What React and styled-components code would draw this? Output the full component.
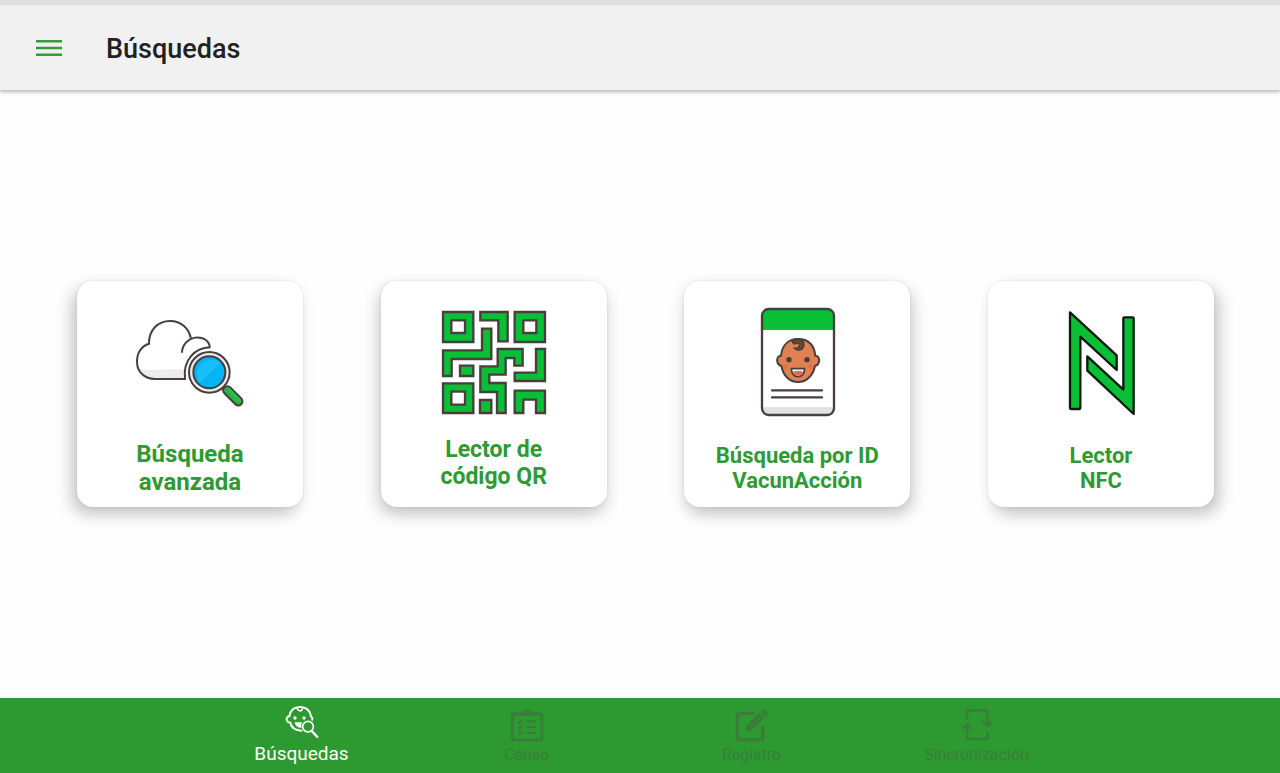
import React, { useState } from 'react'
import styled, { createGlobalStyle } from 'styled-components'

const INK = '#483f3c'
const GREEN = '#09bf35'

const MenuIcon = () => (
  <svg width='26' height='18' viewBox='0 0 26 18' fill='#379c37' aria-hidden='true'>
    <path d='M0 1h26v2.4H0zM0 7.8h26v2.4H0zM0 14.6h26v2.4H0z' />
  </svg>
)

const CloudSearchIcon = () => (
  <svg viewBox='30 -6 360 360' fill='none' stroke={INK} strokeWidth='6' aria-hidden='true'>
    <path
      d='M195 222H105C73 222 51 200 51 170C51 143 65 122 87 116C86 75 114 48 150 48C183 48 208 70 213 102C240 91 266 105 269 126C225 128 190 160 195 222Z'
      fill='#fff'
      stroke='none'
    />
    <path d='M54 188C75 200 130 193 193 193L195 222H105C77 222 59 207 54 188Z' fill='#ececec' stroke='none' />
    <path d='M271 127C225 129 188 163 195 222H105C73 222 51 200 51 170C51 143 65 122 87 116C86 75 114 48 150 48C183 48 208 70 213 102' />
    <path d='M186 143C187 91 262 80 270 127' />
    <path d='M301 244l16 12' strokeWidth='12' />
    <circle cx='268' cy='202' r='61' fill='#e6eaf3' />
    <circle cx='268' cy='202' r='48' fill='#05b4f5' />
    <path d='M238 234A45 45 0 0 1 302 173Z' fill='#18bffb' stroke='none' />
    <path d='M322 256l33 33' strokeWidth='31' strokeLinecap='round' />
    <path d='M322 256l33 33' stroke='#2eae49' strokeWidth='19' strokeLinecap='round' />
    <path d='M327 254l30 31' stroke='#23c24b' strokeWidth='9' strokeLinecap='round' />
  </svg>
)

const QrIcon = () => (
  <svg viewBox='0 0 360 360' fill={GREEN} stroke={INK} strokeWidth='7' fillRule='evenodd' aria-hidden='true'>
    <path d='M27 27H118V117H27ZM52 52V90H93V52Z' />
    <path d='M242 27H333V117H242ZM268 52V90H307V52Z' />
    <path d='M27 241H118V330H27ZM52 266V305H93V266Z' />
    <path d='M139 27H221V115H193V52H139Z' />
    <path d='M144 77H172V168H53V219H27V142H144Z' />
    <path d='M78 188H118V219H78Z' />
    <path d='M191 138H266V188H241V165H215V215H166V240H215V330H189V267H139V190H191Z' />
    <path d='M306 138H333V234H242V209H306Z' />
    <path d='M138 291H172V330H138Z' />
    <path d='M242 263H333V330H306V290H268V330H242Z' />
  </svg>
)

const IdCardIcon = () => (
  <svg viewBox='-9 9 360 360' fill='none' stroke={INK} strokeWidth='7' strokeLinecap='round' aria-hidden='true'>
    <rect x='66' y='27' width='216' height='318' rx='20' fill='#fff' stroke='none' />
    <path d='M66 90V47Q66 27 86 27H262Q282 27 282 47V90Z' fill={GREEN} stroke='none' />
    <path d='M66 321H282V325Q282 345 262 345H86Q66 345 66 325Z' fill='#e2e2e2' stroke='none' />
    <rect x='66' y='27' width='216' height='318' rx='20' />
    <path
      d='M174 117C208 117 223 139 226 167C240 166 243 192 225 198C219 228 199 246 174 246C149 246 130 228 124 198C106 192 109 166 123 167C126 139 142 117 174 117Z'
      fill='#e08152'
      strokeWidth='6'
    />
    <path
      d='M157 124C162 117 178 115 185 120C194 127 194 140 187 147C180 153 169 151 162 144C170 146 178 143 178 136C178 130 172 127 168 131C161 133 157 129 157 124Z'
      fill='#65453c'
      strokeWidth='4'
      strokeLinejoin='round'
    />
    <circle cx='147' cy='179' r='8' fill={INK} stroke='none' />
    <circle cx='201' cy='179' r='8' fill={INK} stroke='none' />
    <circle cx='137' cy='200' r='7' fill='#e4704a' stroke='none' />
    <circle cx='211' cy='200' r='7' fill='#e4704a' stroke='none' />
    <path d='M154 206H194C193 222 185 230 174 230C163 230 155 222 154 206Z' fill='#fff' strokeWidth='5' strokeLinejoin='round' />
    <path d='M158 215Q174 209 190 215Q185 227 174 227Q163 227 158 215Z' fill='#f0645b' stroke='none' />
    <path d='M96 271H246M96 292H246' />
  </svg>
)

const NfcIcon = () => (
  <svg viewBox='-27 9 360 360' fill={GREEN} stroke='#0b1a0d' strokeWidth='7' strokeLinejoin='round' aria-hidden='true'>
    <path d='M60 37L200 166V210L91 110V324Q91 327 88 327H63Q60 327 60 324Z' />
    <path d='M251 342L112 212V169L220 269V55Q220 52 223 52H248Q251 52 251 55Z' />
  </svg>
)

const BabySearchIcon = () => (
  <svg viewBox='132 42 108 108' fill='none' stroke='currentColor' strokeWidth='6' strokeLinecap='round' aria-hidden='true'>
    <path d='M184 122C165 121 154 112 151 98C137 98 137 79 148 79C151 61 163 51 180 51C199 51 210 62 213 79C217 82 218 85 217 89' />
    <path d='M171 54C172 63 185 66 187 57' strokeWidth='5' />
    <circle cx='165' cy='84' r='5' fill='currentColor' stroke='none' />
    <circle cx='192' cy='84' r='5' fill='currentColor' stroke='none' />
    <path d='M164 97H186Q182 104 185 113Q168 115 164 97Z' fill='currentColor' stroke='none' />
    <circle cx='204' cy='110' r='16' strokeWidth='5' />
    <path d='M217 125l15 16' strokeWidth='7' />
  </svg>
)

const CensusIcon = () => (
  <svg viewBox='57 36 108 108' fill='none' stroke='currentColor' strokeWidth='9' aria-hidden='true'>
    <rect x='67' y='56' width='89' height='79' rx='7' />
    <path d='M90 62V54Q90 49 95 49H101Q104 43 111 43Q118 43 121 49H127Q132 49 132 54V62Z' fill='currentColor' stroke='none' />
    <path d='M111 79H138M111 96H138M111 114H138' strokeWidth='6' />
    <path d='M84 79l5 5l9 -10M84 96l5 5l9 -10M84 114l5 5l9 -10' strokeWidth='5' />
  </svg>
)

const RegisterIcon = () => (
  <svg viewBox='72 36 108 108' fill='none' stroke='currentColor' strokeWidth='10' aria-hidden='true'>
    <path d='M134 55H88Q82 55 82 61V128Q82 134 88 134H152Q158 134 158 128V92' />
    <path d='M106 109L110 90L147 53L163 69L126 106ZM151 49L156 44Q160 41 164 44L172 52Q175 56 172 60L167 65Z' fill='currentColor' stroke='none' />
  </svg>
)

const SyncIcon = () => (
  <svg viewBox='147 36 108 108' fill='none' stroke='currentColor' strokeWidth='8' aria-hidden='true'>
    <path d='M171 72V52Q171 46 177 46H226Q232 46 232 52V91' />
    <path d='M232 110V126Q232 132 226 132H177Q171 132 171 126V91' />
    <path d='M217 79L232 93L247 79M156 103L171 89L186 103' />
  </svg>
)

const options = [
  { lines: ['Búsqueda', 'avanzada'], icon: <CloudSearchIcon />, size: 24, leading: 28, gap: 17, shadow: -5 },
  { lines: ['Lector de', 'código QR'], icon: <QrIcon />, size: 23, leading: 27, gap: 13, shadow: -2 },
  { lines: ['Búsqueda por ID', 'VacunAcción'], icon: <IdCardIcon />, size: 22, leading: 25, gap: 20, shadow: 2 },
  { lines: ['Lector', 'NFC'], icon: <NfcIcon />, size: 22, leading: 25, gap: 20, shadow: 5 }
]

const tabs = [
  { label: 'Búsquedas', icon: <BabySearchIcon /> },
  { label: 'Censo', icon: <CensusIcon /> },
  { label: 'Registro', icon: <RegisterIcon /> },
  { label: 'Sincronización', icon: <SyncIcon /> }
]

const App = () => {
  const [current, setCurrent] = useState('Búsquedas')

  return (
    <Page>
      <GlobalStyle />
      <StatusBar />
      <Header>
        <MenuButton type='button' aria-label='Menú'>
          <MenuIcon />
        </MenuButton>
        <Title>Búsquedas</Title>
      </Header>
      <Options>
        {options.map(option => (
          <Card key={option.lines[0]} type='button' $shadow={option.shadow}>
            <CardIcon>{option.icon}</CardIcon>
            <CardLabel $size={option.size} $leading={option.leading} $gap={option.gap}>
              {option.lines[0]}
              <br />
              {option.lines[1]}
            </CardLabel>
          </Card>
        ))}
      </Options>
      <TabBar>
        {tabs.map(tab => (
          <Tab
            key={tab.label}
            type='button'
            $active={tab.label === current}
            onClick={() => setCurrent(tab.label)}
          >
            <TabIcon>{tab.icon}</TabIcon>
            {tab.label}
          </Tab>
        ))}
      </TabBar>
    </Page>
  )
}

const GlobalStyle = createGlobalStyle`
  * {
    box-sizing: border-box;
  }
  body {
    margin: 0;
    background: #fefefe;
    font-family: Roboto, sans-serif;
  }
  button {
    border: 0;
    padding: 0;
    font-family: inherit;
    cursor: pointer;
  }
  svg {
    display: block;
  }
`

const Page = styled.div`
  display: flex;
  flex-direction: column;
  min-height: 100vh;
`

const StatusBar = styled.div`
  height: 5px;
  background: #e0e0e0;
`

const Header = styled.header`
  display: flex;
  align-items: center;
  gap: 32px;
  height: 86px;
  padding: 0 24px;
  background: #f1f1f1;
  border-bottom: 1px solid #c8c8c8;
  box-shadow: 0 2px 3px rgba(0, 0, 0, 0.2);
`

const MenuButton = styled.button`
  display: flex;
  align-items: center;
  justify-content: center;
  width: 50px;
  height: 48px;
  background: none;
`

const Title = styled.h1`
  margin: 0;
  padding-top: 2px;
  font-size: 27px;
  font-weight: 500;
  line-height: 32px;
  color: #212121;
`

const Options = styled.main`
  flex: 1;
  display: flex;
  align-items: center;
  justify-content: space-between;
  padding: 0 66px 2px 77px;
`

const Card = styled.button`
  display: flex;
  flex-direction: column;
  align-items: center;
  justify-content: flex-start;
  width: 226px;
  height: 226px;
  padding-top: 22px;
  border-radius: 16px;
  background: #fff;
  box-shadow: ${props => props.$shadow}px 7px 16px rgba(0, 0, 0, 0.24),
    0 0 3px rgba(0, 0, 0, 0.08);
`

const CardIcon = styled.span`
  width: 120px;
  height: 120px;
`

const CardLabel = styled.span`
  margin-top: ${props => props.$gap}px;
  font-size: ${props => props.$size}px;
  line-height: ${props => props.$leading}px;
  font-weight: 700;
  text-align: center;
  color: #2e9a33;
`

const TabBar = styled.nav`
  display: flex;
  justify-content: center;
  height: 75px;
  padding-right: 2px;
  background: #2c9a30;
`

const Tab = styled.button`
  display: flex;
  flex-direction: column;
  align-items: center;
  justify-content: flex-start;
  gap: ${props => (props.$active ? 2 : 0)}px;
  width: 225px;
  padding-top: ${props => (props.$active ? 6 : 9)}px;
  background: none;
  color: ${props => (props.$active ? '#fff' : '#3a7d3a')};
  font-size: ${props => (props.$active ? 19 : 16)}px;
  line-height: 24px;
`

const TabIcon = styled.span`
  width: 36px;
  height: 36px;
`

export default App
